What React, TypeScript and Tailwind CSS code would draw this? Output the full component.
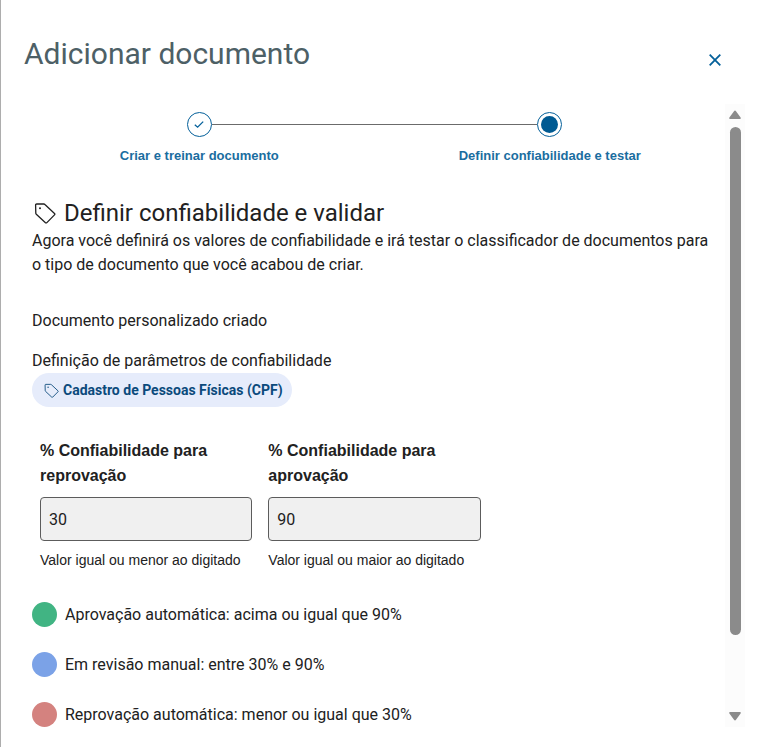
import { useState } from 'react';

interface IconProps {
  className?: string;
}

function TagIcon({ className }: IconProps) {
  return (
    <svg viewBox="0 0 22 22" fill="none" stroke="currentColor" strokeWidth="1.3" strokeLinejoin="round" className={className} aria-hidden="true">
      <path d="M1.600 3a1 1 0 0 1 1-1h7.200a1.600 1.600 0 0 1 1.100.5l9.600 9a1 1 0 0 1 0 1.400l-7.600 7.700a1.200 1.200 0 0 1-1.700 0L2.300 12.300a1.600 1.600 0 0 1-.5-1.100z" />
      <circle cx="6" cy="6.200" r="1" fill="currentColor" stroke="none" />
    </svg>
  );
}

interface StepProps {
  label: string;
  done?: boolean;
}

function Step({ label, done }: StepProps) {
  return (
    <li className="flex flex-1 flex-col items-center">
      <div className="flex w-full items-center">
        {/* Linha que liga as etapas */}
        <span className={done ? 'h-px flex-1' : 'h-px flex-1 bg-[#6b6b6b]'} />
        <span className="flex size-[25px] items-center justify-center rounded-full border border-[#04609a]">
          {done ? (
            <svg viewBox="0 0 12 12" fill="none" stroke="#04609a" strokeWidth="1.3" className="size-3" aria-hidden="true">
              <path d="M1.800 5.800 4.600 8.200 10.200 2.600" />
            </svg>
          ) : (
            <span className="size-[17px] rounded-full bg-[#005a92]" />
          )}
        </span>
        <span className={done ? 'h-px flex-1 bg-[#6b6b6b]' : 'h-px flex-1'} />
      </div>
      <span className="mt-[7px] font-['Liberation_Sans',Arial,sans-serif] text-[13px] leading-6 font-bold text-[#1a6d9f]">{label}</span>
    </li>
  );
}

interface ThresholdFieldProps {
  id: string;
  label: string;
  hint: string;
  value: string;
  onChange: (value: string) => void;
}

function ThresholdField({ id, label, hint, value, onChange }: ThresholdFieldProps) {
  return (
    <div className="px-2 font-['Liberation_Sans',Arial,sans-serif]">
      <label htmlFor={id} className="block text-base leading-[25px] font-bold">
        {label}
      </label>
      <input
        id={id}
        type="text"
        inputMode="numeric"
        value={value}
        aria-describedby={`${id}-hint`}
        onChange={(e) => onChange(e.target.value)}
        className="mt-[9px] block h-11 w-full rounded border border-[#5c5c5c] bg-[#f0f0f0] px-2 font-[Roboto,sans-serif] text-base"
      />
      <p id={`${id}-hint`} className="mt-[7px] text-sm leading-6 whitespace-nowrap">
        {hint}
      </p>
    </div>
  );
}

export default function App() {
  const [reject, setReject] = useState('30');
  const [approve, setApprove] = useState('90');

  const ranges = [
    { color: 'bg-[#41b483]', text: `Aprovação automática: acima ou igual que ${approve}%` },
    { color: 'bg-[#7ba2e7]', text: `Em revisão manual: entre ${reject}% e ${approve}%` },
    { color: 'bg-[#d4827f]', text: `Reprovação automática: menor ou igual que ${reject}%` },
  ];

  return (
    <div className="flex min-h-screen flex-col border-l border-[#adadad] bg-white pr-5 pb-5 pl-[23px] font-[Roboto,sans-serif] text-[#212121]">
      <header className="flex h-[104px] items-start justify-between pt-9">
        <h1 className="text-3xl leading-9 text-[#4d6066]">Adicionar documento</h1>
        <button type="button" aria-label="Fechar" className="mt-[18px] mr-6 flex size-3 items-center justify-center text-[#04609a]">
          <svg viewBox="0 0 12 12" fill="none" stroke="currentColor" strokeWidth="1.800" className="size-3" aria-hidden="true">
            <path d="M.7.7l10.600 10.600M11.300.7.7 11.300" />
          </svg>
        </button>
      </header>

      <div className="flex flex-1">
        <main className="min-w-0 flex-1 pt-2">
          <ol className="flex">
            <Step label="Criar e treinar documento" done />
            <Step label="Definir confiabilidade e testar" />
          </ol>

          <section className="px-2 pt-[29px]">
            <h2 className="flex items-center gap-2 text-2xl leading-8">
              <TagIcon className="ml-0.5 size-[22px]" />
              Definir confiabilidade e validar
            </h2>
            <p className="text-base leading-6">
              Agora você definirá os valores de confiabilidade e irá testar o classificador de documentos para o tipo de documento que você acabou de criar.
            </p>

            <p className="mt-8 text-base leading-6">Documento personalizado criado</p>
            <p className="mt-4 text-base leading-6">Definição de parâmetros de confiabilidade</p>

            <div className="flex">
              <span className="flex h-[34px] items-center gap-1 rounded-full bg-[#e6ecfb] pr-[9px] pl-3 text-sm font-bold text-[#0b4a7c]">
                <TagIcon className="size-[15px]" />
                Cadastro de Pessoas Físicas (CPF)
              </span>
            </div>

            <form className="mt-[31px] grid grid-cols-3">
              <ThresholdField
                id="reject"
                label="% Confiabilidade para reprovação"
                hint="Valor igual ou menor ao digitado"
                value={reject}
                onChange={setReject}
              />
              <ThresholdField
                id="approve"
                label="% Confiabilidade para aprovação"
                hint="Valor igual ou maior ao digitado"
                value={approve}
                onChange={setApprove}
              />
            </form>

            <ul className="mt-[30px] flex flex-col gap-[25px]">
              {ranges.map((range) => (
                <li key={range.color} className="flex items-center gap-2 text-base leading-[25px]">
                  <span className={`size-[25px] rounded-full ${range.color}`} />
                  {range.text}
                </li>
              ))}
            </ul>
          </section>
        </main>

        {/* Barra de rolagem */}
        <div className="flex w-5 flex-col items-center bg-[#fcfcfc] py-[6px]" aria-hidden="true">
          <svg viewBox="0 0 12 10" className="h-[10px] w-3 fill-[#8b8b8b]">
            <path d="M5 1.200a1.200 1.200 0 0 1 2 0l4.600 6.300A1 1 0 0 1 10.800 9H1.200a1 1 0 0 1-.8-1.500z" />
          </svg>
          <div className="my-[7px] flex w-[11px] flex-1 flex-col">
            <div className="h-[88%] rounded-full bg-[#8b8b8b]" />
          </div>
          <svg viewBox="0 0 12 10" className="h-[10px] w-3 fill-[#8b8b8b]">
            <path d="M5 8.800a1.200 1.200 0 0 0 2 0l4.600-6.300A1 1 0 0 0 10.800 1H1.200a1 1 0 0 0-.8 1.500z" />
          </svg>
        </div>
      </div>
    </div>
  );
}
